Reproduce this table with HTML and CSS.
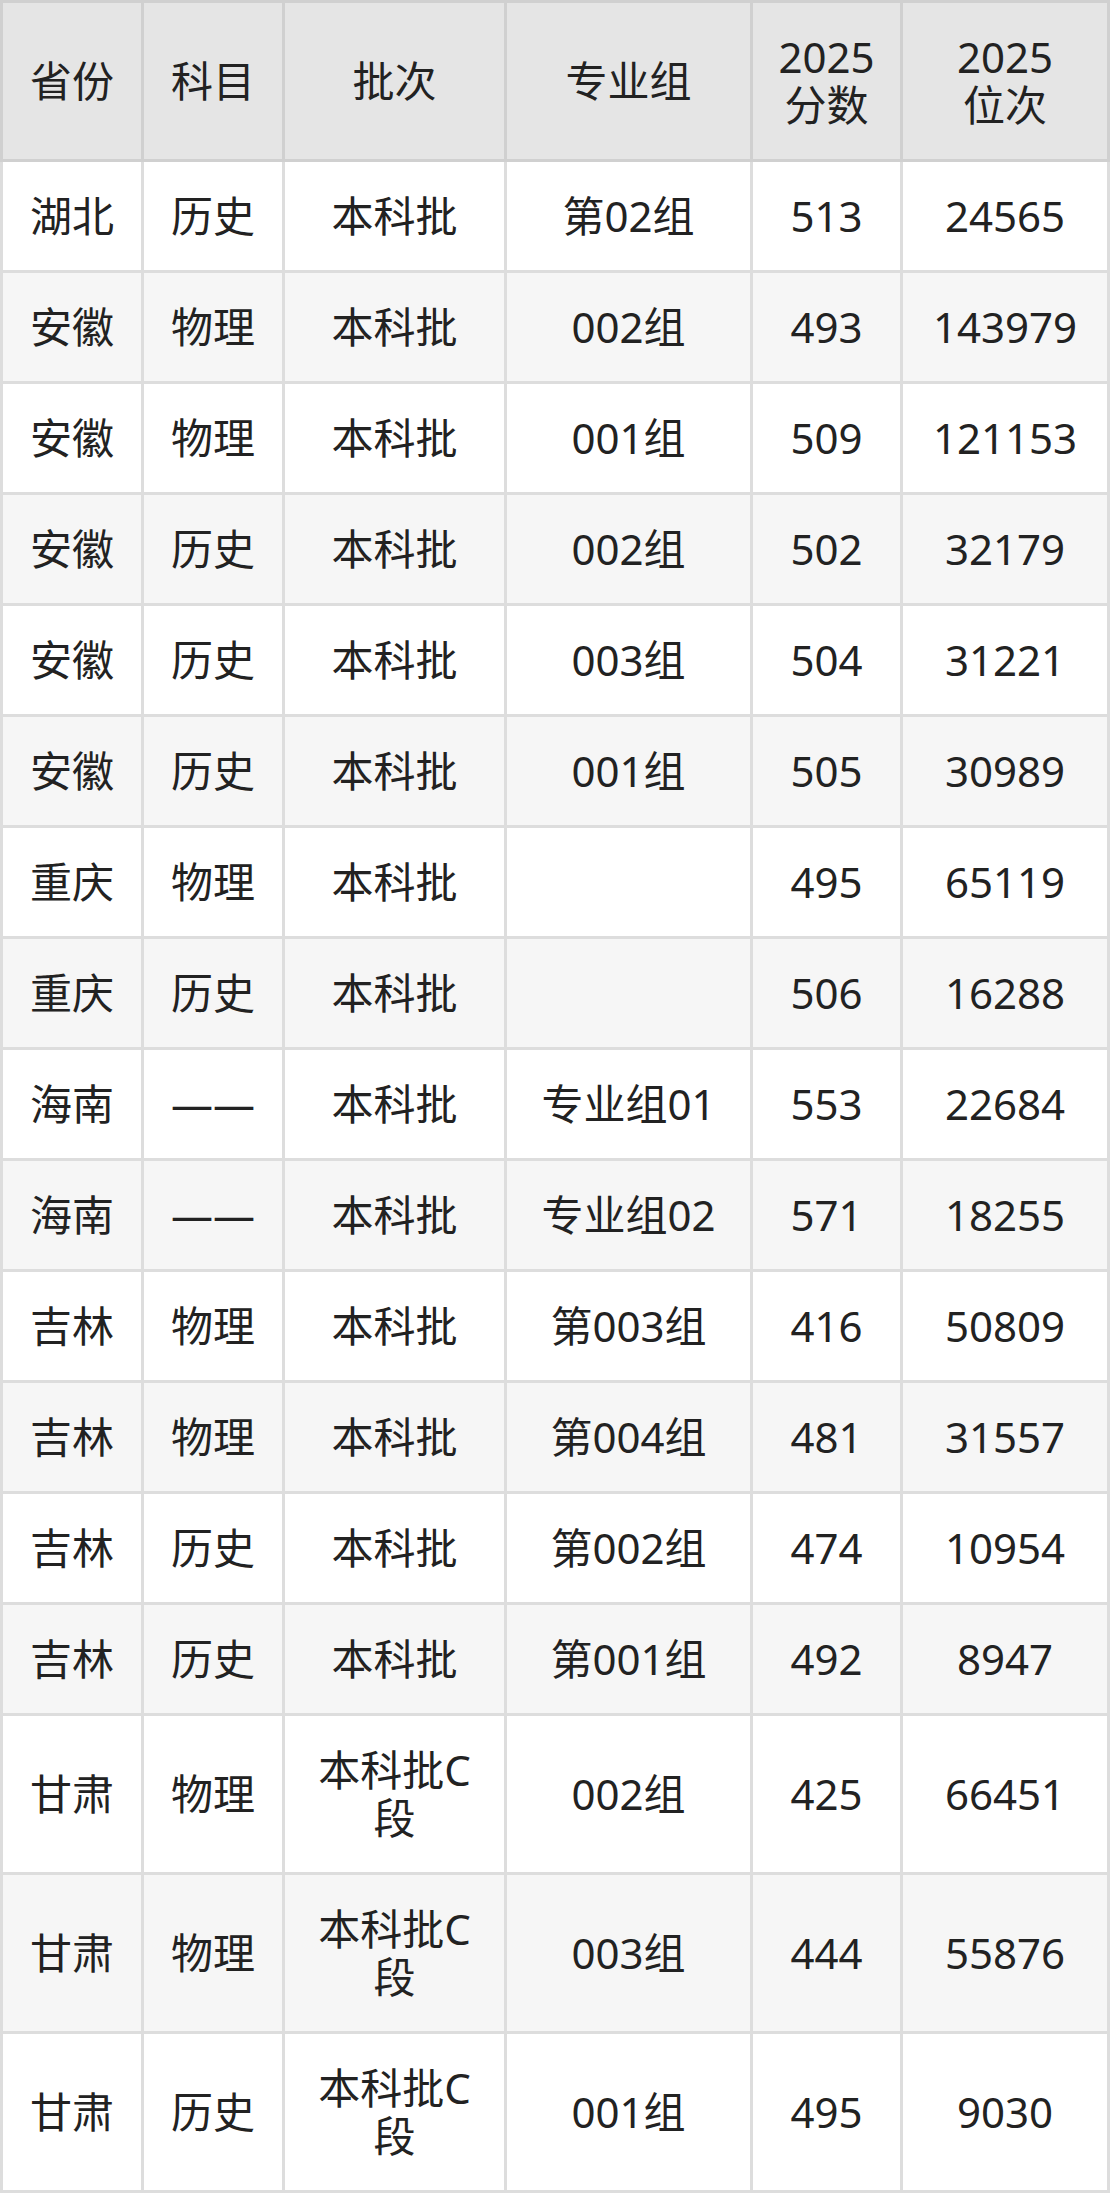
FILE: index.html
```html
<!DOCTYPE html>
<html lang="zh-CN">
<head>
<meta charset="utf-8">
<title>分数位次</title>
<link rel="stylesheet" href="styles.css">
</head>
<body>
<table class="score-table">
  <thead>
    <tr>
      <th class="c-prov">省份</th>
      <th class="c-subj">科目</th>
      <th class="c-batch">批次</th>
      <th class="c-group">专业组</th>
      <th class="c-score">2025<br>分数</th>
      <th class="c-rank">2025<br>位次</th>
    </tr>
  </thead>
  <tbody>
    <tr><td>湖北</td><td>历史</td><td>本科批</td><td>第02组</td><td>513</td><td>24565</td></tr>
    <tr><td>安徽</td><td>物理</td><td>本科批</td><td>002组</td><td>493</td><td>143979</td></tr>
    <tr><td>安徽</td><td>物理</td><td>本科批</td><td>001组</td><td>509</td><td>121153</td></tr>
    <tr><td>安徽</td><td>历史</td><td>本科批</td><td>002组</td><td>502</td><td>32179</td></tr>
    <tr><td>安徽</td><td>历史</td><td>本科批</td><td>003组</td><td>504</td><td>31221</td></tr>
    <tr><td>安徽</td><td>历史</td><td>本科批</td><td>001组</td><td>505</td><td>30989</td></tr>
    <tr><td>重庆</td><td>物理</td><td>本科批</td><td></td><td>495</td><td>65119</td></tr>
    <tr><td>重庆</td><td>历史</td><td>本科批</td><td></td><td>506</td><td>16288</td></tr>
    <tr><td>海南</td><td>——</td><td>本科批</td><td>专业组01</td><td>553</td><td>22684</td></tr>
    <tr><td>海南</td><td>——</td><td>本科批</td><td>专业组02</td><td>571</td><td>18255</td></tr>
    <tr><td>吉林</td><td>物理</td><td>本科批</td><td>第003组</td><td>416</td><td>50809</td></tr>
    <tr><td>吉林</td><td>物理</td><td>本科批</td><td>第004组</td><td>481</td><td>31557</td></tr>
    <tr><td>吉林</td><td>历史</td><td>本科批</td><td>第002组</td><td>474</td><td>10954</td></tr>
    <tr><td>吉林</td><td>历史</td><td>本科批</td><td>第001组</td><td>492</td><td>8947</td></tr>
    <tr><td>甘肃</td><td>物理</td><td>本科批C段</td><td>002组</td><td>425</td><td>66451</td></tr>
    <tr><td>甘肃</td><td>物理</td><td>本科批C段</td><td>003组</td><td>444</td><td>55876</td></tr>
    <tr><td>甘肃</td><td>历史</td><td>本科批C段</td><td>001组</td><td>495</td><td>9030</td></tr>
  </tbody>
</table>
</body>
</html>
```
FILE: styles.css
```css
html, body {
  margin: 0;
  padding: 0;
  background: #ffffff;
}

.score-table {
  width: 1110px;
  table-layout: fixed;
  border-collapse: separate;
  border-spacing: 0;
  font-family: "Noto Sans", "Noto Sans CJK SC", sans-serif;
  font-size: 42px;
  line-height: 48px;
  color: #222222;
}

.score-table th,
.score-table td {
  box-sizing: border-box;
  padding: 30px 20px;
  text-align: center;
  vertical-align: middle;
  font-weight: normal;
  border-right: 3px solid #dddddd;
  border-bottom: 3px solid #dddddd;
}

.score-table th {
  background: #e5e5e5;
  border-top: 3px solid #d0d0d0;
  border-right-color: #d0d0d0;
  border-bottom-color: #d0d0d0;
}

.score-table th:first-child,
.score-table td:first-child {
  border-left: 3px solid #dddddd;
}

.score-table th:first-child {
  border-left-color: #d0d0d0;
}

.score-table tbody tr:nth-child(even) td {
  background: #f6f6f6;
}

.c-prov { width: 144px; }
.c-subj { width: 141px; }
.c-batch { width: 222px; }
.c-group { width: 246px; }
.c-score { width: 150px; }
.c-rank { width: 207px; }
```
